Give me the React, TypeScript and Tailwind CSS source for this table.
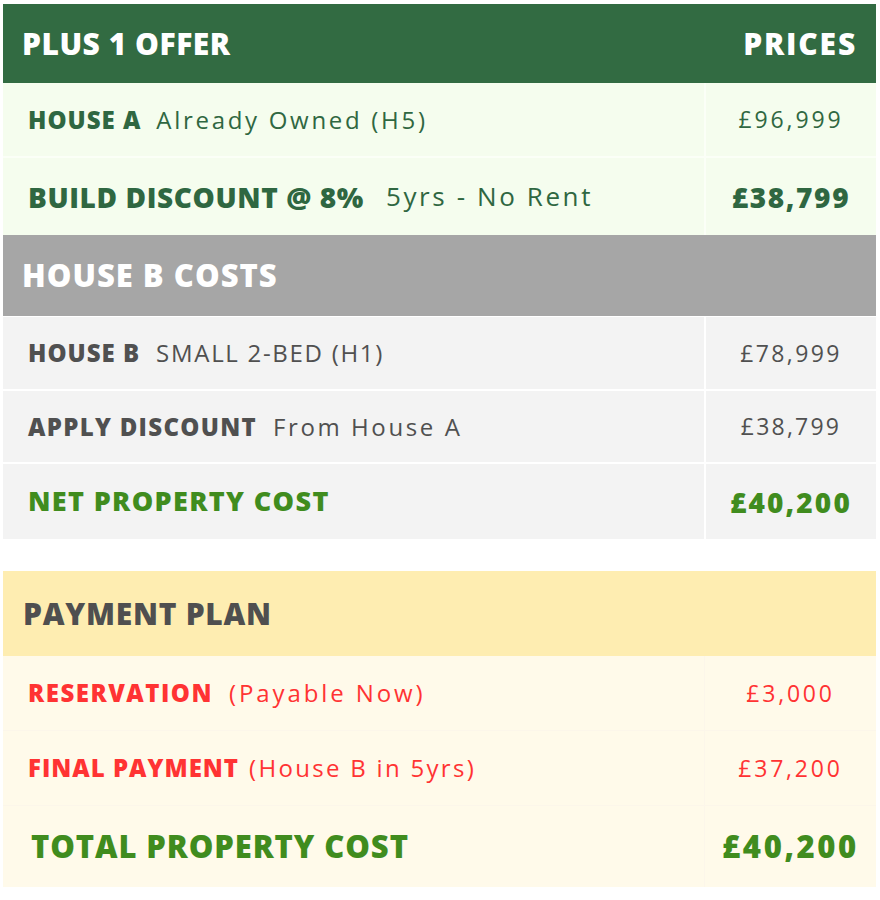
const font = { fontFamily: '"Open Sans", "Liberation Sans", sans-serif' };

type Row = {
  label: string;
  note?: string;
  value: string;
  labelCls: string;
  noteCls?: string;
  valueCls: string;
};

const PriceRow = ({ row, bg, color, height }: { row: Row; bg: string; color: string; height: string }) => (
  <>
    <div className={`${bg} ${height} flex items-center pl-[25px] ${color}`}>
      <span className={`font-extrabold ${row.labelCls}`}>{row.label}</span>
      {row.note && <span className={`font-normal ${row.noteCls}`}>{row.note}</span>}
    </div>
    <div className={`${bg} ${height} flex items-center justify-center ${color} ${row.valueCls}`}>{row.value}</div>
  </>
);

export default function App() {
  return (
    <div className="bg-white min-h-[900px] pt-[4px] pl-[3px] pr-[4px]" style={font}>
      {/* offer */}
      <div className="h-[79px] bg-[#326b42] flex items-center justify-between pl-[19px] pr-[21px] text-white text-[30px] font-extrabold">
        <span className="tracking-[0.5px]">PLUS 1 OFFER</span>
        <span className="tracking-[1.8px] mr-[-2px]">PRICES</span>
      </div>
      <div className="grid grid-cols-[701px_1fr] gap-[2px] bg-[#fbfff7]">
        <PriceRow
          row={{
            label: "HOUSE A",
            note: "Already Owned (H5)",
            value: "£96,999",
            labelCls: "text-[24px] tracking-[1px]",
            noteCls: "ml-[15px] text-[24px] tracking-[2.7px]",
            valueCls: "text-[23px] tracking-[2.9px]",
          }}
          bg="bg-[#f5fdee]"
          color="text-[#2f6741]"
          height="h-[73px]"
        />
        <PriceRow
          row={{
            label: "BUILD DISCOUNT @ 8%",
            note: "5yrs - No Rent",
            value: "£38,799",
            labelCls: "text-[28px] tracking-[0.6px]",
            noteCls: "ml-[22px] text-[26px] tracking-[2.6px]",
            valueCls: "text-[28px] font-extrabold tracking-[1.6px]",
          }}
          bg="bg-[#f5fdee]"
          color="text-[#2f6741]"
          height="h-[77px]"
        />
      </div>

      {/* house b */}
      <div className="h-[81px] bg-[#a6a6a6] flex items-center pl-[19px] text-white text-[31px] font-extrabold tracking-[1px]">
        HOUSE B COSTS
      </div>
      <div className="grid grid-cols-[701px_1fr] gap-[2px] pt-[1px] bg-white">
        <PriceRow
          row={{
            label: "HOUSE B",
            note: "SMALL 2-BED (H1)",
            value: "£78,999",
            labelCls: "text-[24px] tracking-[1px]",
            noteCls: "ml-[16px] text-[24px] tracking-[1.7px]",
            valueCls: "text-[23px] tracking-[2.4px]",
          }}
          bg="bg-[#f3f3f3]"
          color="text-[#505050]"
          height="h-[72px]"
        />
        <PriceRow
          row={{
            label: "APPLY DISCOUNT",
            note: "From House A",
            value: "£38,799",
            labelCls: "text-[24px] tracking-[1.3px]",
            noteCls: "ml-[16px] text-[24px] tracking-[2.6px]",
            valueCls: "text-[23px] tracking-[2.2px]",
          }}
          bg="bg-[#f3f3f3]"
          color="text-[#505050]"
          height="h-[71px]"
        />
        <PriceRow
          row={{
            label: "NET PROPERTY COST",
            value: "£40,200",
            labelCls: "text-[27px] tracking-[1.35px]",
            valueCls: "text-[28px] font-extrabold tracking-[2.1px]",
          }}
          bg="bg-[#f3f3f3]"
          color="text-[#408c1e]"
          height="h-[75px]"
        />
      </div>

      {/* payment plan */}
      <div className="mt-[32px] h-[85px] bg-[#feedb1] flex items-center pl-[20px] text-[#4f4f4f] text-[30px] font-extrabold tracking-[0.75px]">
        PAYMENT PLAN
      </div>
      <div className="grid grid-cols-[701px_1fr] gap-[1px] bg-[#fcf6ea]">
        <PriceRow
          row={{
            label: "RESERVATION",
            note: "(Payable Now)",
            value: "£3,000",
            labelCls: "text-[24px] tracking-[1.5px]",
            noteCls: "ml-[16px] text-[24px] tracking-[2.9px]",
            valueCls: "text-[23px] tracking-[2.8px]",
          }}
          bg="bg-[#fffaea]"
          color="text-[#ff3333]"
          height="h-[74px]"
        />
        <PriceRow
          row={{
            label: "FINAL PAYMENT",
            note: "(House B in 5yrs)",
            value: "£37,200",
            labelCls: "text-[24px] tracking-[1px]",
            noteCls: "ml-[10px] text-[24px] tracking-[2.3px]",
            valueCls: "text-[23px] tracking-[2.8px]",
          }}
          bg="bg-[#fffaea]"
          color="text-[#ff3333]"
          height="h-[74px]"
        />
        <div className="bg-[#fffaea] h-[81px] flex items-center pl-[28px] text-[#408c1e] text-[31px] font-extrabold tracking-[0.9px]">
          TOTAL PROPERTY COST
        </div>
        <div className="bg-[#fffaea] h-[81px] flex items-center justify-center text-[#408c1e] text-[31px] font-extrabold tracking-[2.6px]">
          £40,200
        </div>
      </div>
    </div>
  );
}
